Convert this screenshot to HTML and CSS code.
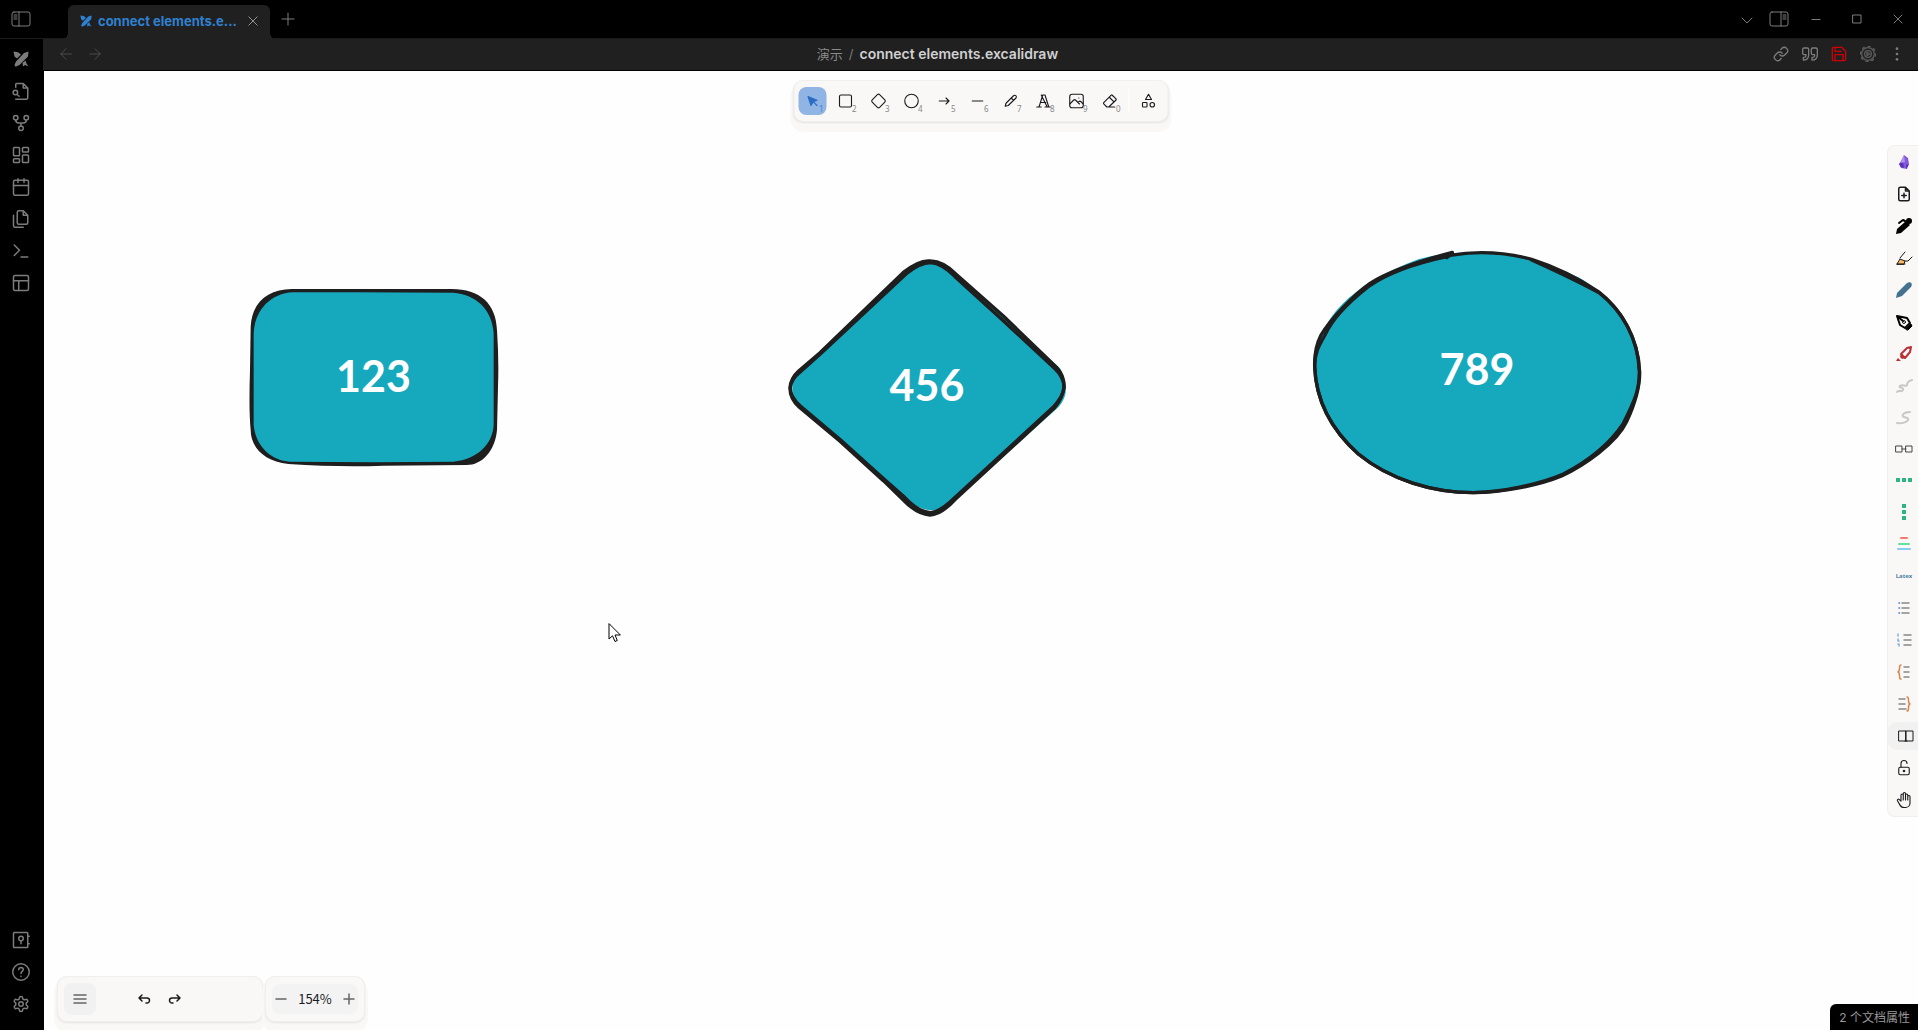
FILE: index.html
```html
<!DOCTYPE html>
<html lang="zh-CN">
<head>
<meta charset="utf-8">
<title>connect elements.excalidraw</title>
<meta name="viewport" content="width=device-width, initial-scale=1">
<link rel="stylesheet" href="styles.css">
</head>
<body>
<svg class="defs" aria-hidden="true">
  <symbol id="logo" viewBox="0 0 16 16"><path fill="currentColor" stroke="none" d="M15.500.500l-.5 5-8.500 8.500-4 1.800L1.500 14 3 10.500 11 2zM.500.500l4.500.7 3 2.300-4 4-2.500-2zM12.500 9.500l1 3 2 3-3.500-1.500-2 1.500-.5-3.500z"/></symbol>
</svg>

<header class="titlebar">
  <button class="win sidebar-toggle" aria-label="Toggle left sidebar"><svg viewBox="0 0 20 18"><rect x="1" y="2" width="18" height="14" rx="2"/><path d="M8 2v14M3 5h3M3 7h3M3 9h3"/></svg></button>
  <div class="tab">
    <svg class="tab-icon"><use href="#logo"/></svg>
    <span class="tab-title">connect elements.e...</span>
    <button class="tab-close" aria-label="Close tab"><svg viewBox="0 0 12 12"><path d="M1 1l10 10M11 1L1 11"/></svg></button>
  </div>
  <button class="win add" aria-label="New tab"><svg viewBox="0 0 14 14"><path d="M7 1v12M1 7h12"/></svg></button>
  <div class="window-controls">
    <button class="win" aria-label="Tab list"><svg viewBox="0 0 18 18"><path d="M4 8l5 5 5-5"/></svg></button>
    <button class="win" aria-label="Toggle right sidebar"><svg viewBox="0 0 20 18"><rect x="1" y="2" width="18" height="14" rx="2"/><path d="M12 2v14M14 5h3M14 7h3M14 9h3"/></svg></button>
    <button class="win sys" aria-label="Minimize"><svg viewBox="0 0 18 18"><path d="M5 9.500h8"/></svg></button>
    <button class="win sys" aria-label="Maximize"><svg viewBox="0 0 18 18"><rect x="5" y="5" width="8" height="8"/></svg></button>
    <button class="win sys" aria-label="Close"><svg viewBox="0 0 18 18"><path d="M5 5l8 8M13 5l-8 8"/></svg></button>
  </div>
</header>

<div class="workspace">
  <nav class="rail" aria-label="Ribbon">
    <button aria-label="Excalidraw"><svg class="logo"><use href="#logo"/></svg></button>
    <button aria-label="Quick switcher"><svg viewBox="0 0 24 24"><path d="M5 7V3a1 1 0 0 1 1-1h9l6 6v13a2 2 0 0 1-2 2H5M15 2v6h6"/><circle cx="4.500" cy="14" r="3"/><path d="M7 17l2.500 2"/></svg></button>
    <button aria-label="Graph view"><svg viewBox="0 0 24 24"><circle cx="5" cy="5" r="3"/><circle cx="19" cy="5" r="3"/><circle cx="12" cy="19" r="3"/><path d="M5 8c0 3 2 4 4 4h6c2 0 4-1 4-4M12 12v4"/></svg></button>
    <button aria-label="Canvas"><svg viewBox="0 0 24 24"><rect x="2" y="2" width="8" height="11" rx="1"/><rect x="14" y="2" width="8" height="6" rx="1"/><rect x="14" y="12" width="8" height="10" rx="1"/><rect x="2" y="17" width="8" height="5" rx="1"/></svg></button>
    <button aria-label="Daily note"><svg viewBox="0 0 24 24"><rect x="2" y="3" width="20" height="20" rx="2"/><path d="M2 10h20M8 1v5M16 1v5"/></svg></button>
    <button aria-label="Templates"><svg viewBox="0 0 24 24"><path d="M15 1H9a2 2 0 0 0-2 2v14a2 2 0 0 0 2 2h10a2 2 0 0 0 2-2V7zM15 1v6h6M2 7v14a2 2 0 0 0 2 2h11"/></svg></button>
    <button aria-label="Command palette"><svg viewBox="0 0 24 24"><path d="M3 4l7 7-7 7M12 20h9"/></svg></button>
    <button aria-label="Workspaces"><svg viewBox="0 0 24 24"><rect x="2" y="2" width="20" height="20" rx="2"/><path d="M2 9h20M9 9v13"/></svg></button>
    <span class="spacer"></span>
    <button aria-label="Open vault"><svg viewBox="0 0 24 24"><rect x="2" y="2" width="19" height="20" rx="1"/><circle cx="12" cy="10" r="3"/><path d="M12 13v4M21 7h2M21 17h2"/></svg></button>
    <button aria-label="Help"><svg viewBox="0 0 24 24"><circle cx="12" cy="12" r="11"/><path d="M9 9a3 3 0 0 1 6 0c0 2-3 2.500-3 5M12 17.500v.5"/></svg></button>
    <button aria-label="Settings"><svg viewBox="0 0 24 24"><path d="M12.220 2h-.44a2 2 0 0 0-2 2v.18a2 2 0 0 1-1 1.730l-.43.25a2 2 0 0 1-2 0l-.15-.08a2 2 0 0 0-2.730.73l-.22.38a2 2 0 0 0 .73 2.730l.15.1a2 2 0 0 1 1 1.720v.51a2 2 0 0 1-1 1.740l-.15.09a2 2 0 0 0-.73 2.730l.22.38a2 2 0 0 0 2.730.73l.15-.08a2 2 0 0 1 2 0l.43.25a2 2 0 0 1 1 1.730V20a2 2 0 0 0 2 2h.44a2 2 0 0 0 2-2v-.18a2 2 0 0 1 1-1.730l.43-.25a2 2 0 0 1 2 0l.15.08a2 2 0 0 0 2.730-.73l.22-.39a2 2 0 0 0-.73-2.730l-.15-.08a2 2 0 0 1-1-1.740v-.5a2 2 0 0 1 1-1.740l.15-.09a2 2 0 0 0 .73-2.730l-.22-.38a2 2 0 0 0-2.730-.73l-.15.08a2 2 0 0 1-2 0l-.43-.25a2 2 0 0 1-1-1.730V4a2 2 0 0 0-2-2z"/><circle cx="12" cy="12" r="3"/></svg></button>
  </nav>

  <main class="pane">
    <div class="view-header">
      <div class="group nav">
        <button aria-label="Back"><svg viewBox="0 0 24 24"><path d="M12 19l-7-7 7-7M19 12H5"/></svg></button>
        <button aria-label="Forward"><svg viewBox="0 0 24 24"><path d="M5 12h14M12 5l7 7-7 7"/></svg></button>
      </div>
      <div class="crumbs"><a href="#">演示</a><span class="slash">/</span><strong>connect elements.excalidraw</strong></div>
      <div class="group actions">
        <button aria-label="Copy link"><svg viewBox="0 0 24 24"><path d="M10 13a5 5 0 0 0 7.540.54l3-3a5 5 0 0 0-7.070-7.070l-1.720 1.710M14 11a5 5 0 0 0-7.540-.54l-3 3a5 5 0 0 0 7.070 7.070l1.710-1.710"/></svg></button>
        <button aria-label="Open as Markdown"><svg viewBox="0 0 24 24"><path d="M2 21c5 0 8-2 8-8V5c0-1-1-2-2-2H3C2 3 1 4 1 5v6c0 1 1 2 2 2h3c0 4-1 4-4 4zM15 21c5 0 8-2 8-8V5c0-1-1-2-2-2h-5c-1 0-2 1-2 2v6c0 1 1 2 2 2h3c0 4-1 4-4 4z"/></svg></button>
        <button class="save" aria-label="Save"><svg viewBox="0 0 24 24"><path d="M16 2H4a2 2 0 0 0-2 2v16a2 2 0 0 0 2 2h16a2 2 0 0 0 2-2V8zM6 22v-9h12v9M6 2v6h9"/></svg></button>
        <button class="dim" aria-label="Run scripts"><svg viewBox="0 0 24 24"><circle cx="12" cy="12" r="9.500"/><circle cx="12" cy="12" r="5"/><path d="M10.500 9.500l4 2.500-4 2.500z"/><circle cx="12" cy="12" r="11.500" stroke-dasharray="3 6"/></svg></button>
        <button aria-label="More options"><svg viewBox="0 0 24 24"><g fill="currentColor" stroke="none"><circle cx="12" cy="4" r="2"/><circle cx="12" cy="12" r="2"/><circle cx="12" cy="20" r="2"/></g></svg></button>
      </div>
    </div>

    <div class="canvas">
      <figure class="node node-rect">
        <svg viewBox="0 0 861 633"><path class="fill" d="M185 62H670Q795 70 797 190V470Q790 578 680 580H185Q70 575 66 460V180Q75 68 185 62Z"/>
        <path class="ink" d="M185 57H665C750 58 798 100 801 180Q807 270 804 350L801 480C795 545 755 585 710 585L460 587Q330 592 175 582C100 574 62 530 62 480Q56 420 60 300L62 170C66 95 115 58 185 57ZM190 67C115 70 71 130 71 195V465C77 530 125 572 180 575L430 577 670 575C745 568 788 520 791 465V190C786 115 735 73 670 68L370 67Z"/></svg>
        <figcaption>123</figcaption>
      </figure>
      <figure class="node node-diamond">
        <svg viewBox="0 0 942 867"><path class="fill" d="M480 66Q510 50 560 108L870 385Q908 455 865 502L555 780Q485 845 400 772L88 500Q48 442 84 395L400 103Q450 62 480 66Z"/>
        <path class="pen" d="M400 97Q450 58 482 63Q520 64 560 104L700 228 860 382Q883 408 882 440Q880 472 852 505L556 778Q512 825 480 825Q440 822 400 780L340 722 210 604 88 502Q59 475 60 443Q62 415 86 393L150 338Z"/>
        <path class="pen" d="M408 102Q450 68 482 68Q515 70 555 110L695 238 855 386Q882 412 882 442Q880 468 850 501L553 774Q512 815 482 818Q445 816 404 772L336 712 212 600 92 499Q61 471 61 443Q64 417 88 398L155 338Z"/></svg>
        <figcaption>456</figcaption>
      </figure>
      <figure class="node node-ellipse">
        <svg viewBox="0 0 1122 831"><path class="fill" d="M385 88Q460 65 560 68Q720 72 865 142Q1040 240 1048 425Q1040 600 870 708Q720 790 550 788Q360 785 225 690Q80 585 75 400Q85 200 385 88Z"/>
        <path class="pen" d="M487 67C380 95 300 122 240 160C190 195 120 270 93 315C75 350 73 380 74 410C78 520 130 605 205 672C300 750 430 788 550 788C640 788 750 765 815 738C880 708 980 640 1010 575C1040 510 1050 465 1049 425C1045 320 990 235 925 185C870 148 800 112 725 88C650 68 560 62 480 76L470 83"/>
        <path class="pen" d="M470 80C400 95 300 124 235 170C180 213 130 260 105 315C85 350 74 370 74 410C78 520 130 605 205 672C300 750 430 788 550 788C640 786 750 762 820 732C900 690 960 640 1000 580C1035 510 1048 480 1048 425C1045 330 1000 245 930 190C870 157 800 124 725 90"/></svg>
        <figcaption>789</figcaption>
      </figure>
      <svg class="pointer" viewBox="0 0 13 20" aria-hidden="true"><path d="M1 1v15l3.500-3.200L7 18.500l2.300-1L7 12h5z"/></svg>

      <div class="toolbar island" role="toolbar" aria-label="Shapes">
        <button class="on" aria-label="Selection"><svg viewBox="0 0 24 24"><path fill="currentColor" d="M6 6l4 12 3-5 5-2zM13.500 13.500l4.500 4.500"/></svg><small>1</small></button>
        <button aria-label="Rectangle"><svg viewBox="0 0 24 24"><rect x="4" y="4" width="16" height="16" rx="2"/></svg><small>2</small></button>
        <button aria-label="Diamond"><svg viewBox="0 0 24 24"><path d="M10.500 20.400l-6.900-6.900c-.8-.8-.8-2.200 0-3l6.900-6.900c.8-.8 2.200-.8 3 0l6.900 6.900c.8.8.8 2.200 0 3l-6.900 6.900c-.8.8-2.200.8-3 0z"/></svg><small>3</small></button>
        <button aria-label="Ellipse"><svg viewBox="0 0 24 24"><circle cx="12" cy="12" r="9"/></svg><small>4</small></button>
        <button aria-label="Arrow"><svg viewBox="0 0 24 24"><path d="M5 12h13M14 8l4 4-4 4"/></svg><small>5</small></button>
        <button aria-label="Line"><svg viewBox="0 0 24 24"><path d="M5 12h14"/></svg><small>6</small></button>
        <button aria-label="Draw"><svg viewBox="0 0 24 24"><path d="M5 19l1-4L16 5c1-1 2.500-1 3.300 0s.8 2 0 3L9 18zM13 8l3 3"/></svg><small>7</small></button>
        <button aria-label="Text"><svg viewBox="0 0 24 24"><path d="M3 20h6M14 20h7M6 20l5-16h3l5 16M9 4l8 16M9 14h6"/></svg><small>8</small></button>
        <button aria-label="Image"><svg viewBox="0 0 24 24"><rect x="3" y="3" width="18" height="18" rx="3"/><path d="M3 16l5-5c1-1 2-1 3 0l5 5M14 14l1-1c1-1 2-1 3 0l3 3M15 8h.1"/></svg><small>9</small></button>
        <button aria-label="Eraser"><svg viewBox="0 0 24 24"><path d="M19 20H8.500l-4.200-4.300a1 1 0 0 1 0-1.400l10-10a1 1 0 0 1 1.400 0l5 5a1 1 0 0 1 0 1.400L11 20M18 13.300L11.700 7"/></svg><small>0</small></button>
        <span class="divider"></span>
        <button aria-label="More tools"><svg viewBox="0 0 24 24"><path d="M12 3l-4 7h8z"/><circle cx="17" cy="17" r="3"/><rect x="4" y="14" width="6" height="6" rx="1"/></svg></button>
      </div>

      <div class="tools island" role="toolbar" aria-label="Pinned tools">
        <button aria-label="Obsidian"><svg viewBox="0 0 18 18"><g stroke="none"><path fill="#8458d8" d="M9 2l4 3 1 6-2 5-6-1-2-4 2-3z"/><path fill="#5a30b8" d="M4 11l4-2 1 6-3-1zM11 12l3-1-3 5z"/><path fill="#b094f2" d="M9 2l1 7-4 1 1-4z"/></g></svg></button>
        <button aria-label="New file"><svg viewBox="0 0 24 24"><path d="M14 3v5h5M17 21H7a2 2 0 0 1-2-2V5a2 2 0 0 1 2-2h7l5 5v11a2 2 0 0 1-2 2zM12 11v6M9 14h6"/></svg></button>
        <button aria-label="Pen"><svg viewBox="0 0 18 18"><g stroke="none" fill="#000"><path d="M1 17l1-5 9-8 4 4-9 8z"/><circle cx="14" cy="4" r="3"/></g><path stroke="#000" stroke-width="2" d="M4 6l4-3 2 1"/></svg></button>
        <button aria-label="Highlighter"><svg viewBox="0 0 18 18"><path fill="#ffb95c" d="M2 15l3-5 5 2-1 3z"/><path d="M5 9l5-6M10 12h3l4-4M2 15h8"/></svg></button>
        <button aria-label="Blue pen"><svg viewBox="0 0 18 18"><path fill="#44718f" stroke="none" d="M1 17l1-5L12 2c4-2 6 1 4 4L7 15z"/></svg></button>
        <button aria-label="Fountain pen"><svg viewBox="0 0 18 18"><path stroke="#000" stroke-width="2" d="M2 3l3 9 5 3 5-5-3-5zM2 3l6 5"/><circle cx="9" cy="9" r="1.500"/><path fill="#000" stroke="#000" d="M11 16l5-5 1 2-4 4z"/></svg></button>
        <button aria-label="Marker"><svg viewBox="0 0 18 18"><path stroke="#b83237" stroke-width="2" d="M6 9l6-6 4-1-1 5-5 6z"/><path fill="#b83237" stroke="none" d="M6 8l5 5-4 1-2-2zM3 13l3 3H1z"/></svg></button>
        <button aria-label="Thin brush"><svg viewBox="0 0 18 18"><path stroke="#c8c8c8" stroke-width="2" d="M2 15c2-3 5 1 6-2S3 11 5 9s7 1 7-1 1-4 5-5"/></svg></button>
        <button aria-label="Thick brush"><svg viewBox="0 0 18 18"><path stroke="#c8c8c8" stroke-width="2" d="M15 3C8 3 6 7 9 8s5 1 4 3-6 4-11 3"/></svg></button>
        <button class="short" aria-label="Connect elements"><svg viewBox="0 0 18 18"><path stroke="#444" d="M1 6h6v6H1zM11 6h6v6h-6zM7 9h4"/></svg></button>
        <button aria-label="Distribute horizontally"><svg viewBox="0 0 18 18"><path fill="#2cb583" stroke="none" d="M1 7h4v4H1zM7 7h4v4H7zM13 7h4v4h-4z"/></svg></button>
        <button aria-label="Distribute vertically"><svg viewBox="0 0 18 18"><path fill="#2cb583" stroke="none" d="M7 1h4v4H7zM7 7h4v4H7zM7 13h4v4H7z"/></svg></button>
        <button aria-label="Align center"><svg viewBox="0 0 18 18"><path stroke="#f47a68" stroke-width="2" d="M6 3h6"/><path stroke="#62e0a2" stroke-width="2" d="M4 9h10"/><path stroke="#85cdf5" stroke-width="2" d="M3 14h12"/></svg></button>
        <button class="latex">Latex</button>
        <button aria-label="Bulleted list"><svg class="list" viewBox="0 0 18 18"><path stroke="#888" d="M7 4h7M7 9h7M7 14h7"/><path stroke="#3c78c8" d="M4 4h.5M4 9h.5M4 14h.5"/></svg></button>
        <button aria-label="Numbered list"><svg class="list" viewBox="0 0 18 18"><path stroke="#888" d="M9 4h7M9 9h7M9 14h7"/><path stroke="#82aee0" d="M3 3v2M3 8v2h1M3 13h1v2"/></svg></button>
        <button aria-label="Left brace"><svg class="list" viewBox="0 0 18 18"><path stroke="#888" d="M9 4h5M9 9h5M9 14h5"/><path stroke="#d78650" d="M6 2c-3 0 0 6-3 7 3 1 0 7 3 7"/></svg></button>
        <button aria-label="Right brace"><svg class="list" viewBox="0 0 18 18"><path stroke="#888" d="M4 4h6M4 9h6M4 14h7"/><path stroke="#d78650" d="M12 2c3 0 0 6 3 7-3 1 0 7-3 7"/></svg></button>
        <button class="active" aria-label="Library"><svg viewBox="0 0 18 18"><path d="M2 4h7v10H2zM9 4h7v10H9zM8 14h2"/></svg></button>
        <button class="soft" aria-label="Unlock"><svg viewBox="0 0 24 24"><rect x="5" y="11" width="14" height="10" rx="2"/><circle cx="12" cy="16" r="1"/><path d="M8 11V6a4 4 0 0 1 8 0"/></svg></button>
        <button class="soft" aria-label="Hand"><svg viewBox="0 0 24 24"><path d="M8 13V5.500a1.500 1.500 0 0 1 3 0V12M11 5.500v-2a1.500 1.500 0 1 1 3 0V12M14 5.500a1.500 1.500 0 0 1 3 0V12M17 7.500a1.500 1.500 0 0 1 3 0V16a6 6 0 0 1-6 6h-2c-3 0-4.500-1.500-5.500-3.500L3.300 13c-.8-1.600 1-2.800 2.500-1.500L8 13.500"/></svg></button>
      </div>

      <footer class="controls">
        <div class="history island">
          <button class="menu" aria-label="Menu"><svg viewBox="0 0 18 18"><path d="M3 5h12M3 9h12M3 13h12"/></svg></button>
          <button aria-label="Undo"><svg viewBox="0 0 18 18"><path d="M7 11L4 8l3-3M4 8h8a2.500 2.500 0 0 1 0 5h-1"/></svg></button>
          <button aria-label="Redo"><svg viewBox="0 0 18 18"><path d="M11 11l3-3-3-3M14 8H6a2.500 2.500 0 0 0 0 5h1"/></svg></button>
        </div>
        <div class="zoom island">
          <div class="zoom-group">
            <button aria-label="Zoom out"><svg viewBox="0 0 18 18"><path d="M4 9h10"/></svg></button>
            <button class="level">154%</button>
            <button aria-label="Zoom in"><svg viewBox="0 0 18 18"><path d="M4 9h10M9 4v10"/></svg></button>
          </div>
        </div>
      </footer>
      <div class="status">2 个文档属性</div>
    </div>
  </main>
</div>
</body>
</html>
```
FILE: styles.css
```css
* { box-sizing: border-box; }
html, body { height: 100%; }
body {
  margin: 0;
  display: flex;
  flex-direction: column;
  overflow: hidden;
  background: #000;
  color: #7c7c7c;
  font: 13px/20px Inter, "Noto Sans CJK SC", sans-serif;
}
button {
  display: flex;
  align-items: center;
  justify-content: center;
  flex: none;
  margin: 0;
  padding: 0;
  border: 0;
  background: none;
  color: inherit;
  font: inherit;
}
svg {
  display: block;
  width: 18px;
  height: 18px;
  fill: none;
  stroke: currentColor;
  stroke-width: 2;
  stroke-linecap: round;
  stroke-linejoin: round;
}
.defs { position: absolute; width: 0; height: 0; }

/* Title bar and tab */
.titlebar {
  display: flex;
  flex: none;
  height: 39px;
  border-bottom: 1px solid #1a1a1a;
}
.titlebar svg { stroke-width: 1; }
.win { width: 32px; height: 38px; }
.win svg { width: 20px; }
.sidebar-toggle { margin-left: 5px; }
.tab {
  position: relative;
  display: flex;
  align-items: center;
  gap: 6px;
  width: 202px;
  height: 34px;
  margin: 5px 0 0 31px;
  padding: 0 8px 2px 12px;
  border-radius: 6px 6px 0 0;
  background: #202020;
  color: #2f81d0;
}
.tab::before, .tab::after {
  content: "";
  position: absolute;
  bottom: 0;
  width: 6px;
  height: 6px;
}
.tab::before { left: -6px; background: radial-gradient(circle at 0 0, transparent 6px, #202020 6px); }
.tab::after { right: -6px; background: radial-gradient(circle at 100% 0, transparent 6px, #202020 6px); }
.tab .tab-icon { width: 12px; height: 12px; flex: none; }
.tab-title {
  flex: 1;
  font-weight: 700;
  white-space: nowrap;
}
.tab-close { width: 18px; height: 18px; color: #aaa; }
.tab-close svg { width: 10px; height: 10px; }
.add { width: 36px; }
.add svg { width: 14px; height: 14px; }
.window-controls { display: flex; margin-left: auto; }
.window-controls .sys { width: 41px; }
.window-controls .sys svg { width: 18px; }

/* Ribbon */
.workspace { display: flex; flex: 1; min-height: 0; }
.rail {
  display: flex;
  flex: none;
  flex-direction: column;
  align-items: center;
  width: 43px;
  padding: 4px 1px 10px 0;
}
.rail button { width: 32px; height: 32px; }
.rail .logo { width: 16px; height: 16px; }
.spacer { flex: 1; }

/* View header */
.pane { display: flex; flex: 1; flex-direction: column; min-width: 0; }
.view-header {
  display: flex;
  align-items: center;
  justify-content: space-between;
  flex: none;
  height: 32px;
  padding: 0 7px 1px 8px;
  border-bottom: 1px solid #000;
  background: #202020;
}
.group { display: flex; }
.group button { width: 29px; height: 30px; }
.nav { color: #5a5a5a; }
.nav svg { width: 18px; height: 18px; stroke-width: 1; }
.actions svg { width: 16px; height: 16px; }
.save { color: #d00008; }
.dim { color: #5c5c5c; }
.crumbs { display: flex; gap: 6px; }
.crumbs a { color: #8a8a8a; text-decoration: none; }
.crumbs strong { color: #d0d0d0; font-size: 14px; font-weight: 600; }

/* Drawing surface */
.canvas {
  position: relative;
  flex: 1;
  margin-left: 1px;
  overflow: hidden;
  background: #fefefe;
  color: #1b1b1f;
}
.node { position: absolute; display: grid; place-items: center; margin: 0; }
.node > * { grid-area: 1 / 1; }
.node svg { width: 100%; height: 100%; overflow: visible; stroke: none; }
.node figcaption { color: #fff; font: 700 43px/50px Lato, sans-serif; }
.fill { fill: #16a9be; }
.ink { fill: #1e1e1e; fill-rule: evenodd; }
.pen { stroke: #1e1e1e; stroke-width: 10; }
.node-rect { left: 186px; top: 199px; width: 287px; height: 211px; }
.node-diamond { left: 726px; top: 169px; width: 314px; height: 289px; }
.node-ellipse { left: 1246px; top: 159px; width: 374px; height: 277px; }
.pointer {
  position: absolute;
  left: 564px;
  top: 552px;
  width: 13px;
  height: 20px;
  fill: #fff;
  stroke: #000;
  stroke-width: 1;
}

/* Floating panels */
.island {
  border: 1px solid #f0efee;
  border-radius: 10px;
  background: #f9f8f6;
}
.toolbar {
  position: absolute;
  top: 9px;
  left: 50%;
  display: flex;
  align-items: center;
  gap: 5px;
  height: 42px;
  padding: 0 5px 0 4px;
  transform: translateX(-50%);
  box-shadow: 0 1px 2px #e4e3e2, 0 7px 0 3px #f9f8f7;
}
.toolbar button { position: relative; width: 28px; height: 28px; border-radius: 8px; }
.toolbar svg, .tools svg { stroke-width: 1.5; }
.toolbar small {
  position: absolute;
  right: 3px;
  bottom: 2px;
  color: #888;
  font: 8px/8px "Noto Sans", sans-serif;
}
.toolbar .on { background: #90b4e4; color: #2b6cc4; }
.toolbar .on small { color: #4f80c8; }
.divider { width: 1px; height: 24px; background: #fff; }

.tools {
  position: absolute;
  top: 74px;
  right: 0;
  display: flex;
  flex-direction: column;
  width: 31px;
  border-right: 0;
  border-radius: 8px 0 0 8px;
}
.tools button { width: 30px; height: 32px; padding-left: 2px; }
.tools .short { height: 30px; }
.tools svg { width: 18px; height: 18px; stroke-width: 1; }
.tools svg[viewBox="0 0 24 24"] { stroke-width: 2; }
.tools .soft svg[viewBox="0 0 24 24"] { stroke-width: 1.5; }
.tools svg.list { stroke-width: 1.5; }
.tools .active {
  padding-left: 6px;
  border: solid #f9f8f6;
  border-width: 2px 0;
  border-radius: 10px 0 0 10px;
  background: #f1f1f1;
}
.tools .latex { color: #4f7fa5; font: 700 6px/8px "Noto Sans", sans-serif; }

/* Bottom controls */
.controls {
  position: absolute;
  left: 13px;
  bottom: 8px;
  display: flex;
  align-items: stretch;
  gap: 2px;
}
.controls .island { height: 46px; box-shadow: 0 1px 2px #e4e3e2, 0 7px 0 3px #f9f8f7; }
.history { display: flex; align-items: center; width: 206px; padding: 0 6px; }
.history button { width: 31px; height: 32px; }
.history .menu { width: 32px; margin-right: 32px; border-radius: 8px; background: #f1f1f1; }
.controls svg { stroke-width: 1.5; }
.zoom { display: flex; align-items: center; width: 100px; padding: 0 6px; }
.zoom-group { display: flex; flex: 1; border-radius: 8px; background: #f3f3f3; }
.zoom-group button { width: 18px; height: 30px; }
.zoom-group .level { flex: 1; font: 13px/20px "Noto Sans CJK SC", sans-serif; }
.menu svg, .zoom svg { stroke: #666; }

.status {
  position: absolute;
  right: 0;
  bottom: 0;
  padding: 4px 8px 2px 9px;
  border-radius: 6px 0 0 0;
  background: #000;
  color: #999;
  font-size: 12px;
}
```
